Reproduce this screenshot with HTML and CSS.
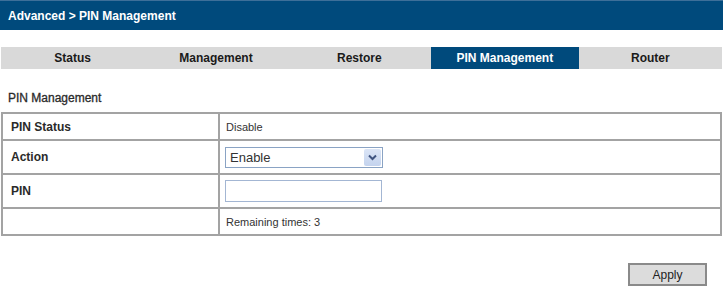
FILE: index.html
```html
<!DOCTYPE html>
<html>
<head>
<meta charset="utf-8">
<link rel="stylesheet" href="styles.css">
</head>
<body>
<div class="header">Advanced &gt; PIN Management</div>
<div class="tabs">
  <div class="tab">Status</div>
  <div class="tab">Management</div>
  <div class="tab">Restore</div>
  <div class="tab active">PIN Management</div>
  <div class="tab">Router</div>
</div>
<div class="section-title">PIN Management</div>
<table class="grid">
  <tr class="r1">
    <td class="label">PIN Status</td>
    <td class="value small">Disable</td>
  </tr>
  <tr class="r2">
    <td class="label">Action</td>
    <td class="value">
      <div class="select">
        <span class="sel-text">Enable</span>
        <span class="sel-btn">
          <svg width="9" height="7" viewBox="0 0 9 7"><path d="M1 1.5 L4.5 5 L8 1.5" fill="none" stroke="#3f5480" stroke-width="2"/></svg>
        </span>
      </div>
    </td>
  </tr>
  <tr class="r3">
    <td class="label">PIN</td>
    <td class="value"><input class="pin" type="text"></td>
  </tr>
  <tr class="r4">
    <td class="label"></td>
    <td class="value small">Remaining times: 3</td>
  </tr>
</table>
<div class="actions">
  <button class="apply">Apply</button>
</div>
</body>
</html>
```
FILE: styles.css
```css
body {
  margin: 0;
  font-family: "Liberation Sans", Arial, sans-serif;
  color: #222;
  background: #fff;
}
.header {
  height: 30px;
  line-height: 30px;
  background: #004a7c;
  color: #fff;
  font-weight: bold;
  font-size: 12px;
  padding-left: 8px;
  border-top: 1px solid #3d6f99;
  box-sizing: border-box;
}
.tabs {
  display: flex;
  margin-top: 17px;
  height: 22px;
  padding: 0 1px 0 1px;
}
.tab {
  flex: 1;
  background: #d9d9d9;
  text-align: center;
  line-height: 22px;
  font-size: 12px;
  font-weight: bold;
  color: #1a1a1a;
}
.tab.active {
  background: #004a7c;
  color: #fff;
  flex: 1.03;
}
.section-title {
  margin-top: 22px;
  padding-left: 8px;
  font-size: 12px;
  line-height: 14px;
  color: #2a2a2a;
  -webkit-text-stroke: 0.3px #2a2a2a;
}
.grid {
  margin-top: 7px;
  margin-left: 1px;
  width: 721px;
  border-collapse: collapse;
  border: 2px solid #a3a3a3;
}
.grid td {
  border: 2px solid #a3a3a3;
  padding: 0;
  vertical-align: middle;
}
.grid .label {
  width: 207px;
  padding-left: 8px;
  font-size: 12px;
  font-weight: bold;
  color: #2a2a2a;
}
.grid .value {
  padding-left: 6px;
  font-size: 12px;
}
.grid .small {
  font-size: 11px;
  color: #333;
}
.r1 td { height: 25px; }
.r2 td { height: 32px; }
.r3 td { height: 32px; }
.r4 td { height: 25px; }
.select {
  display: flex;
  align-items: center;
  width: 158px;
  height: 21px;
  box-sizing: border-box;
  border: 1px solid #8aa3c4;
  margin-left: -1px;
  background: #fff;
}
.sel-text {
  flex: 1;
  padding-left: 4px;
  font-size: 13px;
  color: #333;
}
.sel-btn {
  width: 17px;
  height: 17px;
  margin-right: 1px;
  display: flex;
  align-items: center;
  justify-content: center;
  background: linear-gradient(#dbe5f6, #c4d3ee);
  border-radius: 2px;
}
.pin {
  display: block;
  width: 157px;
  height: 22px;
  box-sizing: border-box;
  border: 1px solid #a3b6d3;
  margin: 0 0 0 -1px;
  padding: 0;
  background: #fff;
}
.actions {
  display: flex;
  justify-content: flex-end;
  padding-right: 16px;
  margin-top: 27px;
}
.apply {
  width: 79px;
  height: 23px;
  background: #dcdcdc;
  border: 2px solid #8a8a8a;
  font-family: "Liberation Sans", Arial, sans-serif;
  font-size: 12px;
  color: #222;
  padding: 0;
}
```
